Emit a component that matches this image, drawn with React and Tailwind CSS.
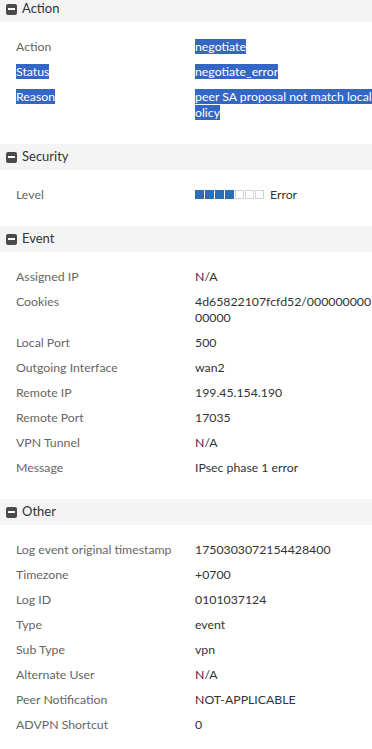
import React from "react";

const font = { fontFamily: "Lato, 'Noto Sans', sans-serif" };

function Header({ title, first }) {
  return (
    <div className={`flex items-center h-[26px] bg-[#f4f4f4] pl-[6px] gap-[5px] ${first ? "-mt-[4px]" : ""}`}>
      <span className="w-[11px] h-[11px] rounded-[2px] bg-[#4a4a4a] flex items-center justify-center">
        <span className="block w-[7px] h-[2px] bg-white" />
      </span>
      <span className="text-[13px] text-[#333]">{title}</span>
    </div>
  );
}

const hl = "bg-[#3466c6] text-white";

function Row({ label, value, labelHl, valueHl }) {
  const lines = Array.isArray(value) ? value : [value];
  return (
    <div className="flex py-[4.5px] leading-[16px] text-[12.3px]">
      <div className="w-[195px] pl-4 shrink-0 text-[#666] whitespace-nowrap">
        {labelHl ? <span className={hl}>{label}</span> : label}
      </div>
      <div className="flex-1 min-w-0 overflow-hidden text-[#333]">
        {lines.map((l, i) => (
          <div key={i} className="whitespace-nowrap">
            {valueHl ? <span className={hl}>{l}</span> : l}
          </div>
        ))}
      </div>
    </div>
  );
}

function Section({ title, first, children }) {
  return (
    <div>
      <Header title={title} first={first} />
      <div className="pt-[12px] pb-[19px]">{children}</div>
    </div>
  );
}

function Level() {
  return (
    <div className="flex py-[4.5px] leading-[16px] text-[12.3px]">
      <div className="w-[195px] pl-4 shrink-0 text-[#666]">Level</div>
      <div className="flex items-center text-[#333]">
        <div className="flex gap-[1px]">
          {[0, 1, 2, 3].map((i) => (
            <span key={i} className="block w-[9px] h-[9px] bg-[#2a6fb6]" />
          ))}
          {[0, 1, 2].map((i) => (
            <span key={i} className="block w-[9px] h-[9px] border border-[#d4d4d4]" />
          ))}
        </div>
        <span className="ml-[6px]">Error</span>
      </div>
    </div>
  );
}

export default function App() {
  return (
    <div className="w-[372px] h-[749px] overflow-hidden bg-white" style={font}>
      <Section title="Action" first>
        <Row label="Action" value="negotiate" valueHl />
        <Row label="Status" value="negotiate_error" labelHl valueHl />
        <Row label="Reason" value={["peer SA proposal not match local", "olicy"]} labelHl valueHl />
      </Section>
      <Section title="Security">
        <Level />
      </Section>
      <Section title="Event">
        <Row label="Assigned IP" value="N/A" />
        <Row label="Cookies" value={["4d65822107fcfd52/000000000", "00000"]} />
        <Row label="Local Port" value="500" />
        <Row label="Outgoing Interface" value="wan2" />
        <Row label="Remote IP" value="199.45.154.190" />
        <Row label="Remote Port" value="17035" />
        <Row label="VPN Tunnel" value="N/A" />
        <Row label="Message" value="IPsec phase 1 error" />
      </Section>
      <Section title="Other">
        <Row label="Log event original timestamp" value="1750303072154428400" />
        <Row label="Timezone" value="+0700" />
        <Row label="Log ID" value="0101037124" />
        <Row label="Type" value="event" />
        <Row label="Sub Type" value="vpn" />
        <Row label="Alternate User" value="N/A" />
        <Row label="Peer Notification" value="NOT-APPLICABLE" />
        <Row label="ADVPN Shortcut" value="0" />
      </Section>
    </div>
  );
}
